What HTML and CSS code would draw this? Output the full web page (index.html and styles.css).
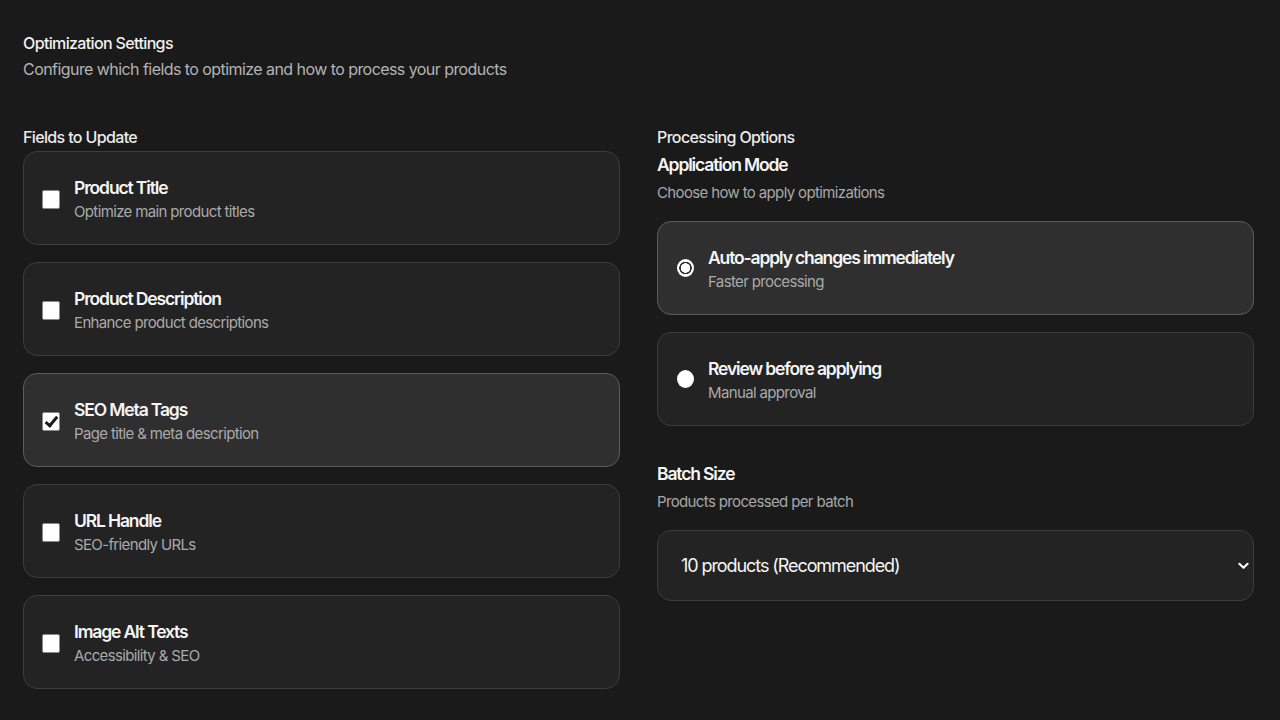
FILE: index.html
```html
<!DOCTYPE html>
<html lang="en">
<head>
  <meta charset="UTF-8" />
  <meta name="viewport" content="width=device-width, initial-scale=1.0"/>
  <title>Optimization Settings</title>
  <link rel="stylesheet" href="styles.css">
</head>
<body>
  <main class="page">
    <header class="intro">
      <h1>Optimization Settings</h1>
      <p>Configure which fields to optimize and how to process your products</p>
    </header>

    <div class="columns">
      <!-- Fields -->
      <section class="fields">
        <h2 class="label">Fields to Update</h2>
        <label class="option">
          <input type="checkbox" class="check" />
          <span class="option-text">
            <span class="option-title">Product Title</span>
            <span class="option-sub">Optimize main product titles</span>
          </span>
        </label>
        <label class="option">
          <input type="checkbox" class="check" />
          <span class="option-text">
            <span class="option-title">Product Description</span>
            <span class="option-sub">Enhance product descriptions</span>
          </span>
        </label>
        <label class="option selected">
          <input type="checkbox" class="check" checked />
          <span class="option-text">
            <span class="option-title">SEO Meta Tags</span>
            <span class="option-sub">Page title &amp; meta description</span>
          </span>
        </label>
        <label class="option">
          <input type="checkbox" class="check" />
          <span class="option-text">
            <span class="option-title">URL Handle</span>
            <span class="option-sub">SEO-friendly URLs</span>
          </span>
        </label>
        <label class="option">
          <input type="checkbox" class="check" />
          <span class="option-text">
            <span class="option-title">Image Alt Texts</span>
            <span class="option-sub">Accessibility &amp; SEO</span>
          </span>
        </label>
      </section>

      <!-- Processing -->
      <section class="processing">
        <h2 class="label">Processing Options</h2>
        <h3 class="group-title">Application Mode</h3>
        <p class="group-sub">Choose how to apply optimizations</p>
        <div class="radios">
          <label class="option selected">
            <input type="radio" name="mode" class="radio" checked />
            <span class="option-text">
              <span class="option-title">Auto-apply changes immediately</span>
              <span class="option-sub">Faster processing</span>
            </span>
          </label>
          <label class="option">
            <input type="radio" name="mode" class="radio" />
            <span class="option-text">
              <span class="option-title">Review before applying</span>
              <span class="option-sub">Manual approval</span>
            </span>
          </label>
        </div>

        <h3 class="group-title batch">Batch Size</h3>
        <p class="group-sub">Products processed per batch</p>
        <div class="select-wrap">
          <select class="select">
            <option>10 products (Recommended)</option>
            <option>25 products</option>
            <option>50 products</option>
          </select>
          <svg class="chevron" viewBox="0 0 12 8" width="11" height="8">
            <path d="M1.5 1.5 L6 6 L10.5 1.5" fill="none" stroke="#fff" stroke-width="2.2" stroke-linecap="round" stroke-linejoin="round"/>
          </svg>
        </div>
      </section>
    </div>
  </main>
</body>
</html>
```

FILE: styles.css
```css
body {
  margin: 0;
  background-color: #1a1a1a;
  color: #f2f2f2;
  font-family: Inter, "Noto Sans", sans-serif;
  letter-spacing: -0.04em;
}

.page {
  padding: 31px 26px 0 23px;
}

.intro h1 {
  margin: 0;
  font-size: 16px;
  line-height: 24px;
  font-weight: 500;
  color: #f0f0f0;
}

.intro p {
  margin: 2px 0 0;
  font-size: 16px;
  line-height: 24px;
  letter-spacing: -0.035em;
  color: #b4b4b4;
}

.columns {
  display: grid;
  grid-template-columns: 1fr 1fr;
  gap: 37px;
  margin-top: 46px;
}

.label {
  margin: 0 0 4px;
  font-size: 16px;
  line-height: 20px;
  font-weight: 500;
  color: #ececec;
}

.fields {
  display: flex;
  flex-direction: column;
}

.fields .option + .option {
  margin-top: 17px;
}

.option {
  display: flex;
  align-items: center;
  gap: 14px;
  height: 94px;
  box-sizing: border-box;
  padding: 0 18px;
  background: #232323;
  border: 1px solid #3c3c3c;
  border-radius: 14px;
  cursor: pointer;
}

.option.selected {
  background: #2f2f2f;
  border-color: #5c5c5c;
}

.option-text {
  display: flex;
  flex-direction: column;
  margin-top: 3px;
}

.option-title {
  font-size: 17.5px;
  line-height: 24px;
  font-weight: 600;
  letter-spacing: -0.065em;
  color: #f5f5f5;
}

.option-sub {
  margin-top: 1px;
  font-size: 15px;
  line-height: 22px;
  color: #aaaaaa;
}

/* checkbox */
.check {
  appearance: none;
  margin: 2px 0 0;
  width: 18px;
  height: 19px;
  flex-shrink: 0;
  background: #fff;
  border: 1px solid #8a8a8a;
  border-radius: 2px;
  position: relative;
}

.check:checked::after {
  content: "";
  position: absolute;
  left: 5px;
  top: 1px;
  width: 4px;
  height: 10px;
  border: solid #1a1a1a;
  border-width: 0 3px 3px 0;
  transform: rotate(40deg);
}

/* radio */
.radio {
  appearance: none;
  margin: 0 0 0 1px;
  width: 17px;
  height: 18px;
  flex-shrink: 0;
  border-radius: 50%;
  background: #fff;
}

.radio:checked {
  background: radial-gradient(circle, #fff 0 4.5px, #2f2f2f 5px 6px, #fff 6.5px);
}

.processing {
  display: flex;
  flex-direction: column;
}

.group-title {
  margin: 2px 0 0;
  font-size: 17.5px;
  line-height: 24px;
  font-weight: 600;
  letter-spacing: -0.065em;
  color: #f5f5f5;
}

.group-sub {
  margin: 6px 0 0;
  font-size: 15px;
  line-height: 20px;
  color: #a8a8a8;
}

.radios {
  display: flex;
  flex-direction: column;
  gap: 17px;
  margin-top: 18px;
}

.group-title.batch {
  margin-top: 36px;
}

.select-wrap {
  position: relative;
  margin-top: 18px;
}

.select {
  appearance: none;
  width: 100%;
  height: 71px;
  padding: 0 40px 0 23px;
  background: #232323;
  border: 1px solid #3c3c3c;
  border-radius: 14px;
  color: #f5f5f5;
  font-family: inherit;
  font-size: 18px;
  letter-spacing: -0.06em;
}

.chevron {
  position: absolute;
  right: 5px;
  top: 32px;
  pointer-events: none;
}
```
